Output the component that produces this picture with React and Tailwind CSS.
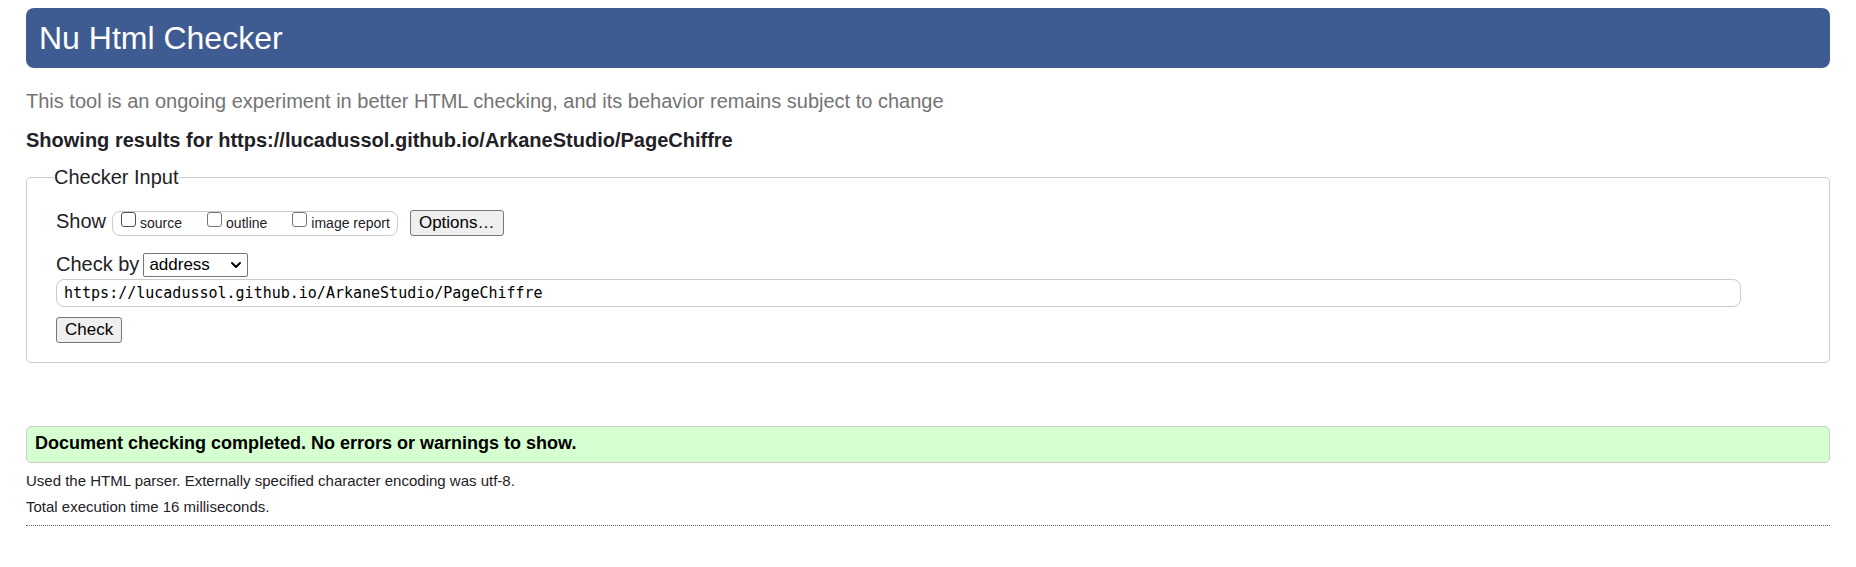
import { ChevronDown } from "lucide-react";

const reports = [
  { id: "source", label: "source", box: "border-[#4f4f4f]" },
  { id: "outline", label: "outline", box: "border-[#767676]" },
  { id: "image-report", label: "image report", box: "border-[#767676]" },
];

const buttonClass =
  "h-[26px] rounded-[3px] border border-[#767676] bg-[#efefef] px-2 text-[17px] leading-6 text-black";

export default function App() {
  return (
    <div className="bg-white px-[26px] pt-2 font-['Liberation_Sans',Arial,sans-serif] text-[#1f2126]">
      <header className="rounded-lg bg-[#3f5c92] px-[13px] py-3">
        <h1 className="text-[32px] leading-9 text-white">Nu Html Checker</h1>
      </header>

      <main>
        <p className="mt-5 text-[20px] leading-[26px] text-[#747474]">
          This tool is an ongoing experiment in better HTML checking, and its behavior remains subject to change
        </p>
        <h2 className="mt-[13px] text-[20px] font-bold leading-[26px]">
          Showing results for https://lucadussol.github.io/ArkaneStudio/PageChiffre
        </h2>

        <form onSubmit={(e) => e.preventDefault()}>
          <fieldset className="mt-3 rounded-[5px] border border-[#cccccc] pb-[19px] pl-[29px] pr-[88px]">
            <legend className="-ml-[2px] text-[20px] leading-6">Checker Input</legend>

            <div className="mt-[21px] flex items-start">
              <span className="text-[20px] leading-[22px]">Show</span>
              <div className="ml-[6px] flex h-[26px] items-center">
                <div className="flex h-[25px] items-center gap-[25px] rounded-lg border border-[#cccccc] pl-2 pr-[7px]">
                  {reports.map((r) => (
                    <label key={r.id} htmlFor={r.id} className="flex items-center gap-1 text-[14px] leading-[22px]">
                      <input
                        id={r.id}
                        type="checkbox"
                        className={`mb-[7px] size-[15px] appearance-none rounded-[3px] border bg-white ${r.box}`}
                      />
                      {r.label}
                    </label>
                  ))}
                </div>
              </div>
              <button type="button" className={`ml-3 ${buttonClass}`}>
                Options…
              </button>
            </div>

            <div className="mt-[17px] flex items-start">
              <label htmlFor="docselect" className="text-[20px] leading-[22px]">
                Check by
              </label>
              <div className="relative ml-1">
                <select
                  id="docselect"
                  defaultValue="address"
                  className="block h-6 w-[105px] appearance-none rounded-[2px] border border-[#767676] bg-white pl-[5px] text-[17px] leading-[22px] text-black"
                >
                  <option value="address">address</option>
                  <option value="file">file upload</option>
                  <option value="textarea">text input</option>
                </select>
                <ChevronDown
                  aria-hidden="true"
                  className="pointer-events-none absolute right-1 top-1 size-4 text-black"
                  strokeWidth={3}
                />
              </div>
            </div>

            <input
              type="url"
              aria-label="Address of the document to check"
              defaultValue="https://lucadussol.github.io/ArkaneStudio/PageChiffre"
              className="mt-[2px] block h-7 w-full rounded-lg border border-[#cccccc] bg-white px-[7px] font-['DejaVu_Sans_Mono',monospace] text-[15px] leading-6 text-black"
            />
            <button type="submit" className={`mt-[10px] block ${buttonClass}`}>
              Check
            </button>
          </fieldset>
        </form>

        <p className="mt-[63px] rounded-[5px] border border-[#cccccc] bg-[#d5ffd0] px-2 pb-[9px] pt-[6px] text-[18px] font-bold leading-5 text-black">
          Document checking completed. No errors or warnings to show.
        </p>
        <div className="border-b border-dotted border-[#666666] pb-[5px] pt-[5px] text-[15px] leading-[26px]">
          <p>Used the HTML parser. Externally specified character encoding was utf-8.</p>
          <p>Total execution time 16 milliseconds.</p>
        </div>
      </main>
    </div>
  );
}
